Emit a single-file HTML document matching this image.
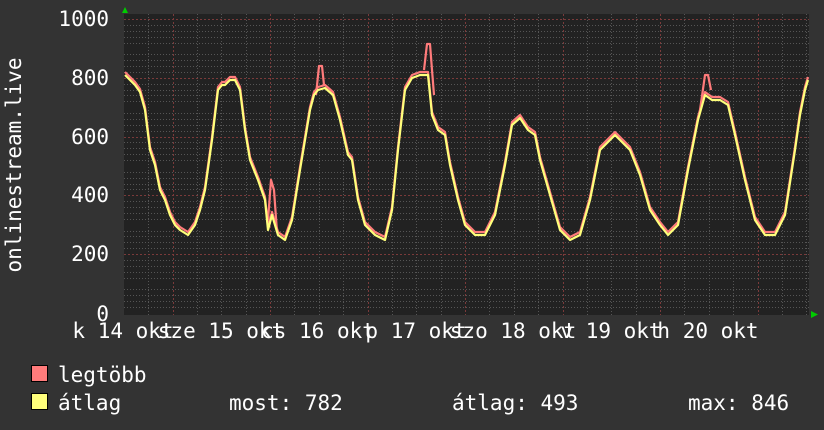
<!DOCTYPE html>
<html><head><meta charset="utf-8"><style>
html,body{margin:0;padding:0;background:#333;}
svg{display:block}
text{font-family:"DejaVu Sans Mono","Liberation Mono",monospace;font-size:21px;fill:#fff}
</style></head><body>
<svg width="824" height="430" viewBox="0 0 824 430" xmlns="http://www.w3.org/2000/svg">
<rect x="0" y="0" width="824" height="430" fill="#333"/>
<rect x="124" y="14" width="685" height="301" fill="#222"/>
<g stroke="#555" stroke-width="1" stroke-dasharray="1,2">
<path d="M124 25.5H809M124 31.5H809M124 37.5H809M124 43.5H809M124 54.5H809M124 60.5H809M124 66.5H809M124 72.5H809M124 84.5H809M124 90.5H809M124 95.5H809M124 101.5H809M124 113.5H809M124 119.5H809M124 125.5H809M124 131.5H809M124 142.5H809M124 148.5H809M124 154.5H809M124 160.5H809M124 172.5H809M124 178.5H809M124 184.5H809M124 189.5H809M124 201.5H809M124 207.5H809M124 213.5H809M124 219.5H809M124 231.5H809M124 236.5H809M124 242.5H809M124 248.5H809M124 260.5H809M124 266.5H809M124 272.5H809M124 278.5H809M124 289.5H809M124 295.5H809M124 301.5H809M124 307.5H809"/>
<path d="M148.5 14V315M197.5 14V315M221.5 14V315M246.5 14V315M294.5 14V315M319.5 14V315M343.5 14V315M392.5 14V315M416.5 14V315M441.5 14V315M489.5 14V315M514.5 14V315M538.5 14V315M587.5 14V315M611.5 14V315M636.5 14V315M684.5 14V315M709.5 14V315M733.5 14V315M782.5 14V315M806.5 14V315"/>
</g>
<g stroke="#7a3a3a" stroke-width="1" stroke-dasharray="2,2">
<path d="M124 19.5H809M124 78.5H809M124 137.5H809M124 195.5H809M124 254.5H809"/>
<path d="M173.5 14V315M270.5 14V315M368.5 14V315M465.5 14V315M563.5 14V315M660.5 14V315M758.5 14V315"/>
</g>
<g fill="none" stroke-width="2.2" stroke-linejoin="round">
<polyline transform="translate(0,-3)" stroke="#ff7b7b" points="125,75 130,80 135,85 140,92 145,110 150,150 155,165 160,190 165,200 170,215 175,225 180,230 188,235 195,225 200,210 205,190 212,140 218,90 222,85 225,85 230,80 235,80 240,90 245,130 250,160 258,180 265,200 268,230 272,215 278,235 285,240 292,220 300,170 305,140 310,110 314,95 318,90 325,88 333,95 340,120 348,155 352,160 358,200 365,225 375,235 385,240 392,210 398,150 405,90 412,78 420,75 428,75 432,115 438,130 445,135 450,165 458,200 465,225 475,235 485,235 495,215 505,165 512,125 520,118 528,130 535,135 540,160 550,195 560,230 570,240 580,235 590,200 600,150 610,140 615,135 620,140 630,150 640,175 650,210 660,225 668,235 678,225 688,170 698,120 705,95 712,100 720,100 728,105 735,135 745,180 755,220 765,235 775,235 785,215 795,150 800,115 805,90 808,80"/>
<polyline stroke="#ff7b7b" points="268,220 271,180 274,190 277,232"/>
<polyline stroke="#ff7b7b" points="316,95 319,66 322,66 324,85"/>
<polyline stroke="#ff7b7b" points="424,70 427,44 430,44 432,70 434,95"/>
<polyline stroke="#ff7b7b" points="700,110 705,75 708,75 711,90"/>
<polyline stroke="#ffff7b" points="125,75 130,80 135,85 140,92 145,110 150,150 155,165 160,190 165,200 170,215 175,225 180,230 188,235 195,225 200,210 205,190 212,140 218,90 222,85 225,85 230,80 235,80 240,90 245,130 250,160 258,180 265,200 268,230 272,215 278,235 285,240 292,220 300,170 305,140 310,110 314,95 318,90 325,88 333,95 340,120 348,155 352,160 358,200 365,225 375,235 385,240 392,210 398,150 405,90 412,78 420,75 428,75 432,115 438,130 445,135 450,165 458,200 465,225 475,235 485,235 495,215 505,165 512,125 520,118 528,130 535,135 540,160 550,195 560,230 570,240 580,235 590,200 600,150 610,140 615,135 620,140 630,150 640,175 650,210 660,225 668,235 678,225 688,170 698,120 705,95 712,100 720,100 728,105 735,135 745,180 755,220 765,235 775,235 785,215 795,150 800,115 805,90 808,80"/>
</g>
<polygon points="122,13 125,7 128,13" fill="#0c0"/>
<polygon points="811,311 818,314.5 811,318" fill="#0c0"/>
<g text-anchor="end">
<text x="109" y="26">1000</text>
<text x="109" y="85">800</text>
<text x="109" y="144">600</text>
<text x="109" y="202">400</text>
<text x="109" y="261">200</text>
<text x="109" y="321">0</text>
</g>
<text transform="translate(21,165) rotate(-90)" text-anchor="middle">onlinestream.live</text>
<g text-anchor="middle">
<text x="123" y="338">k 14 okt</text>
<text x="221" y="338">sze 15 okt</text>
<text x="318" y="338">cs 16 okt</text>
<text x="416" y="338">p 17 okt</text>
<text x="513" y="338">szo 18 okt</text>
<text x="611" y="338">v 19 okt</text>
<text x="708" y="338">h 20 okt</text>
</g>
<rect x="31.5" y="365.5" width="16" height="16" fill="#ff7b7b" stroke="#000"/>
<rect x="31.5" y="393.5" width="16" height="16" fill="#ffff7b" stroke="#000"/>
<text x="58" y="382">legtöbb</text>
<text x="58" y="410">átlag</text>
<text x="229" y="410">most: 782</text>
<text x="452" y="410">átlag: 493</text>
<text x="688" y="410">max: 846</text>
</svg>
</body></html>
